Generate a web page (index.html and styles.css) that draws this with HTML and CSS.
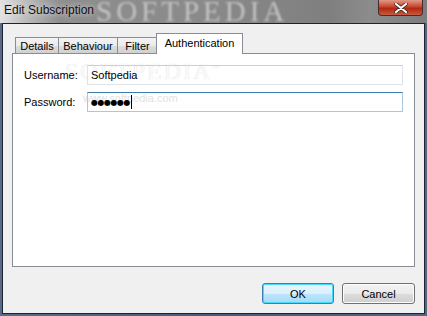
FILE: index.html
```html
<!DOCTYPE html>
<html lang="en">
<head>
  <meta charset="UTF-8">
  <title>Edit Subscription</title>
  <link rel="stylesheet" href="styles.css">
</head>
<body>

  <div class="window">
    <div class="titlebar">
      <span class="title">Edit Subscription</span>
      <span class="mark">SOFTPEDIA</span>
      <span class="close">
        <svg width="14" height="10" viewBox="0 0 14 10">
          <path d="M2 1 L12 9 M12 1 L2 9" stroke="#3a2a2a" stroke-width="3.6" stroke-linecap="round"/>
          <path d="M2 1 L12 9 M12 1 L2 9" stroke="#fff" stroke-width="2.2" stroke-linecap="round"/>
        </svg>
      </span>
    </div>

    <div class="client">
      <div class="tabs">
        <div class="tab t-details">Details</div>
        <div class="tab t-behaviour">Behaviour</div>
        <div class="tab t-filter">Filter</div>
        <div class="tab t-auth active">Authentication</div>
      </div>

      <div class="panel">
        <!-- watermark over the fields -->
        <span class="mark-big">SOFTPEDIA<sup>™</sup></span>
        <span class="mark-url">www.softpedia.com</span>

        <div class="row">
          <label>Username:</label>
          <div class="field">Softpedia</div>
        </div>
        <div class="row">
          <label>Password:</label>
          <div class="field focused"><span class="dots">●●●●●●</span><span class="caret"></span></div>
        </div>
      </div>

      <div class="buttons">
        <button class="default">OK</button>
        <button class="cancel">Cancel</button>
      </div>
    </div>
  </div>

</body>
</html>
```

FILE: styles.css
```css
* {
  box-sizing: border-box;
}

body {
  margin: 0;
  font-family: "Liberation Sans", Arial, sans-serif;
  font-size: 11px;
  color: #000;
  background-color: #6b7890;
}

.window {
  width: 427px;
  height: 316px;
  display: flex;
  flex-direction: column;
  background: linear-gradient(to right, #5a6a86, #4a5a78 50%, #556580);
}

.titlebar {
  position: relative;
  height: 23px;
  flex: none;
  overflow: hidden;
  background: linear-gradient(to right, #e2e2e2 0px, #bdbdbd 25px, #8e8e8e 60px, #8a8a8a 200px, #7f7f7f 330px, #8c8c8c 370px, #7d7d7d 427px);
}

.title {
  position: absolute;
  left: 4px;
  top: 3px;
  font-size: 12px;
  color: #111;
  text-shadow: 0 0 6px rgba(255, 255, 255, 0.9);
}

.mark {
  position: absolute;
  left: 96px;
  top: 0;
  font-family: "Liberation Serif", serif;
  font-size: 29px;
  line-height: 23px;
  letter-spacing: 4px;
  color: #c4c4c4;
  filter: blur(1.2px);
}

.close {
  position: absolute;
  left: 378px;
  top: 0;
  width: 45px;
  height: 16px;
  border: 1px solid #4a2a2a;
  border-top: none;
  border-radius: 0 0 4px 4px;
  background: linear-gradient(#e09a88, #c8452e 45%, #b0280f 55%, #c85a40);
  display: flex;
  align-items: center;
  justify-content: center;
}

.client {
  flex: 1;
  margin: 0 2px 2px 2px;
  border: 1px solid #1c2434;
  background-color: #f0f0f0;
  display: flex;
  flex-direction: column;
}

.tabs {
  display: flex;
  align-items: flex-end;
  height: 30px;
  padding-left: 12px;
  margin-bottom: -1px;
}

.tab {
  height: 17px;
  border: 1px solid #898c95;
  border-bottom: none;
  margin-right: -1px;
  line-height: 16px;
  text-align: center;
  background: linear-gradient(#f3f3f3, #ebebeb 50%, #dddddd 50%, #cfcfcf);
  position: relative;
}

.t-details { width: 44px; }
.t-behaviour { width: 60px; }
.t-filter { width: 41px; }

.tab.active {
  width: 87px;
  height: 21px;
  margin-left: -1px;
  line-height: 18px;
  background: #fff;
  z-index: 1;
}

.panel {
  position: relative;
  margin: 0 9px;
  height: 214px;
  border: 1px solid #898c95;
  background: #fff;
  padding: 11px 11px 0 11px;
}

.row {
  display: flex;
  align-items: center;
  margin-bottom: 7px;
}

.row label {
  width: 63px;
  position: relative;
}

.field {
  flex: 1;
  height: 20px;
  border: 1px solid #dfe3e8;
  border-top-color: #cbd0d6;
  padding-left: 3px;
  display: flex;
  align-items: center;
  position: relative;
}

.field.focused {
  border-color: #a8c8e0;
  border-top-color: #3d7bad;
}

.dots {
  font-family: "DejaVu Sans", sans-serif;
  font-size: 8px;
  letter-spacing: -0.5px;
}

.caret {
  width: 1px;
  height: 14px;
  margin-left: 1px;
  background: #000;
}

.mark-big {
  position: absolute;
  left: 52px;
  top: 4px;
  font-family: "Liberation Serif", serif;
  font-size: 24px;
  letter-spacing: 2px;
  color: #fafafa;
  text-shadow: 0 0 1px #d6d6d6;
}

.mark-big sup {
  font-size: 7px;
}

.mark-url {
  position: absolute;
  left: 70px;
  top: 38px;
  font-size: 11px;
  color: #e2e2e2;
}

.buttons {
  display: flex;
  justify-content: flex-end;
  gap: 8px;
  padding: 16px 9px 0 0;
}

button {
  width: 72px;
  height: 21px;
  padding: 0;
  font-family: inherit;
  font-size: 11px;
  color: #000;
  border: 1px solid #707070;
  border-radius: 3px;
  background: linear-gradient(#f2f2f2, #ebebeb 50%, #dddddd 50%, #cfcfcf);
  box-shadow: inset 0 0 0 1px #fcfcfc;
}

button.cancel {
  width: 73px;
}

button.default {
  border-color: #3c7fb1;
  box-shadow: inset 0 0 0 1px #48d8fb;
  background: linear-gradient(#eaf6fd, #d9f0fc 50%, #bee6fd 50%, #a7d9f5);
}
```
